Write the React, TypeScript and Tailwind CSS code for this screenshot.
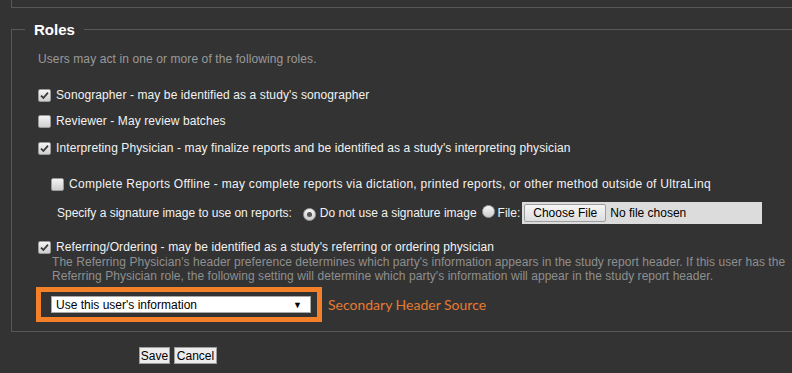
import React from "react";

function Check({ checked }: { checked?: boolean }) {
  return (
    <span className="inline-flex w-[13px] h-[13px] shrink-0 items-center justify-center rounded-[2px] border border-[#9a9a9a] bg-gradient-to-b from-[#f4f4f4] to-[#cfcfcf]">
      {checked && (
        <svg width="9" height="9" viewBox="0 0 9 9">
          <path d="M1 4.6 L3.4 7 L8 1.6" fill="none" stroke="#3a3a3a" strokeWidth="1.8" />
        </svg>
      )}
    </span>
  );
}

function Radio({ checked }: { checked?: boolean }) {
  return (
    <span className="inline-flex w-[13px] h-[13px] shrink-0 items-center justify-center rounded-full border border-[#a0a0a0] bg-gradient-to-b from-[#f6f6f6] to-[#cccccc]">
      {checked && <span className="w-[5px] h-[5px] rounded-full bg-[#555]" />}
    </span>
  );
}

export default function App() {
  return (
    <div
      className="w-[792px] h-[373px] overflow-hidden bg-[#333333] text-[12px] leading-[14px] text-[#f2f2f2]"
      style={{ fontFamily: '"Liberation Sans", Arial, sans-serif' }}
    >
      {/* bottom of previous fieldset */}
      <div className="ml-[11px] h-[8px] border-l border-b border-[#585858]" />

      <fieldset className="ml-[11px] mt-[13px] border border-r-0 border-[#585858] px-0 pb-[9px] min-w-0">
        <legend className="ml-[13px] px-[9px] text-[15px] leading-[17px] font-bold text-white">Roles</legend>

        <div className="pl-[26px] flex flex-col tracking-[0.1px]">
          <p className="mt-[14px] text-[#9a9a9a]">Users may act in one or more of the following roles.</p>

          <label className="mt-[22px] flex items-center gap-[5px]">
            <Check checked />
            <span>Sonographer - may be identified as a study's sonographer</span>
          </label>

          <label className="mt-[12px] flex items-center gap-[5px]">
            <Check />
            <span>Reviewer - May review batches</span>
          </label>

          <label className="mt-[13px] flex items-center gap-[5px]">
            <Check checked />
            <span>Interpreting Physician - may finalize reports and be identified as a study's interpreting physician</span>
          </label>

          <label className="mt-[22px] ml-[13px] flex items-center gap-[5px]">
            <Check />
            <span className="tracking-[0.28px]">Complete Reports Offline - may complete reports via dictation, printed reports, or other method outside of UltraLinq</span>
          </label>

          <div className="mt-[11px] ml-[19px] flex items-center h-[22px] tracking-normal">
            <span>Specify a signature image to use on reports:</span>
            <span className="ml-[11px]"><Radio checked /></span>
            <span className="ml-[4px]">Do not use a signature image</span>
            <span className="ml-[5px]"><Radio /></span>
            <span className="ml-[3px]">File:</span>
            <div className="ml-[2px] w-[240px] h-[22px] bg-[#dcdcdc] flex items-center pl-[2px]">
              <span className="h-[18px] w-[82px] flex items-center justify-center border border-[#9e9e9e] rounded-[2px] bg-gradient-to-b from-[#f6f6f6] to-[#dedede] text-black text-[12px]">
                Choose File
              </span>
              <span className="ml-[4px] text-black">No file chosen</span>
            </div>
          </div>

          <label className="mt-[16px] flex items-center gap-[5px]">
            <Check checked />
            <span>Referring/Ordering - may be identified as a study's referring or ordering physician</span>
          </label>
          <p className="mt-[1px] ml-[14px] text-[#8f8f8f] tracking-[0.05px] whitespace-nowrap">
            The Referring Physician's header preference determines which party's information appears in the study report header. If this user has the
            <br />
            Referring Physician role, the following setting will determine which party's information will appear in the study report header.
          </p>

          <div className="mt-[4px] -ml-[2px] flex items-center tracking-normal">
            <div className="w-[286px] h-[35px] border-[5px] border-[#f4802a] flex items-center pl-[10px]">
              <div className="w-[260px] h-[17px] bg-white border border-[#a8a8a8] flex items-center justify-between pl-[4px] pr-[8px] text-black">
                <span>Use this user's information</span>
                <span className="text-[9px]">▼</span>
              </div>
            </div>
            <span
              className="ml-[6px] text-[14px] text-[#e57b32]"
              style={{ fontFamily: 'Lato, "Open Sans", sans-serif' }}
            >
              Secondary Header Source
            </span>
          </div>
        </div>
      </fieldset>

      <div className="mt-[15px] ml-[139px] flex gap-[4px]">
        <button className="h-[17px] w-[31px] border border-[#9e9e9e] bg-[#ececec] text-black text-[12px] leading-[14px]">Save</button>
        <button className="h-[17px] w-[43px] border border-[#9e9e9e] bg-[#ececec] text-black text-[12px] leading-[14px]">Cancel</button>
      </div>
    </div>
  );
}
